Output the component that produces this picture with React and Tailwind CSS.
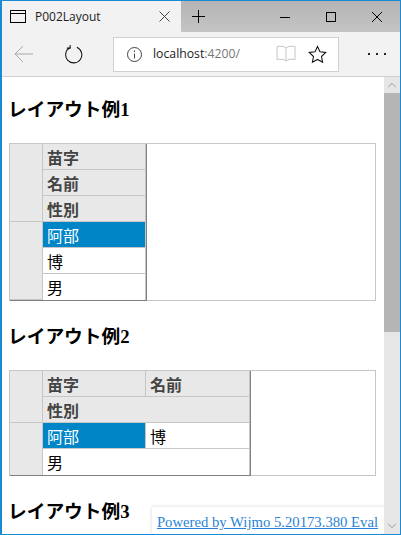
import { ChevronUp, ChevronDown } from "lucide-react";

const cellBase = "flex items-center pl-[4px] h-[26px] border-b border-r border-[#c6c6c6] text-[16px] leading-none font-['Noto_Sans_CJK_JP',sans-serif]";
const head = `${cellBase} bg-[#e8e8e8] font-bold text-[#444444]`;
const data = `${cellBase} bg-white text-black`;
const selected = `${cellBase} bg-[#0085c7] text-white`;
const side = "bg-[#e8e8e8] border-r border-b border-[#c6c6c6] row-span-3";

function Heading({ n, className = "" }) {
  return (
    <h2 className={`text-[18.72px] leading-[24px] font-bold text-black font-['Liberation_Serif','Noto_Sans_CJK_JP',serif] ${className}`}>
      レイアウト例{n}
    </h2>
  );
}

function TitleBar() {
  return (
    <div className="flex h-[31px] bg-gradient-to-b from-[#b4b4b4] to-[#c4c4c4]">
      <div className="flex items-center w-[179px] bg-[#f2f2f2] pl-[8px] pr-[5px]">
        <svg width="18" height="14" viewBox="0 0 18 14" fill="none" stroke="#000" strokeWidth="1">
          <rect x="0.5" y="0.5" width="15" height="12" />
          <path d="M0.5 3.5h15" />
        </svg>
        <span className="ml-[7px] text-[12px] text-[#222] font-['Open_Sans',sans-serif]">P002Layout</span>
        <svg className="ml-auto mr-[6px]" width="11" height="11" viewBox="0 0 11 11" stroke="#444" strokeWidth="1"><path d="M0.5 0.5l10 10M10.5 0.5l-10 10" /></svg>
      </div>
      <div className="flex items-center justify-center w-[34px]">
        <svg width="13" height="13" viewBox="0 0 13 13" stroke="#000" strokeWidth="1"><path d="M6.5 0v13M0 6.5h13" /></svg>
      </div>
      <div className="flex items-center ml-auto">
        <div className="flex items-center justify-center w-[46px]">
          <svg width="10" height="10" viewBox="0 0 10 10" stroke="#000" strokeWidth="1"><path d="M0 5.5h10" /></svg>
        </div>
        <div className="flex items-center justify-center w-[46px]">
          <svg width="10" height="10" viewBox="0 0 10 10" fill="none" stroke="#000" strokeWidth="1"><rect x="0.5" y="0.5" width="9" height="9" /></svg>
        </div>
        <div className="flex items-center justify-center w-[46px]">
          <svg width="10" height="10" viewBox="0 0 10 10" stroke="#000" strokeWidth="1"><path d="M0 0l10 10M10 0L0 10" /></svg>
        </div>
      </div>
    </div>
  );
}

function Toolbar() {
  return (
    <div className="flex items-center h-[45px] bg-[#f2f2f2] border-b border-[#d0d0d0]">
      <svg className="ml-[12px]" width="19" height="18" viewBox="0 0 19 18" fill="none" stroke="#a8a8a8" strokeWidth="1"><path d="M19 9H1M9 1L1 9l8 8" /></svg>
      <svg className="ml-[31px]" width="19" height="20" viewBox="0 0 20 20" fill="none" stroke="#111" strokeWidth="1.1"><path d="M6 3.5A8.5 8.5 0 1 0 13.5 3" /><path d="M6.5 0.5v3.3H3" /></svg>
      <div className="flex items-center ml-[30px] w-[226px] h-[35px] bg-white border border-[#d0d0d0]">
        <svg className="ml-[13px]" width="15" height="15" viewBox="0 0 15 15" fill="none" stroke="#444" strokeWidth="1"><circle cx="7.5" cy="7.5" r="7" /><path d="M7.5 6.5v5M7.5 3.5v1.5" /></svg>
        <span className="ml-[11px] text-[12.25px] text-[#222] font-['Open_Sans',sans-serif]">localhost<span className="text-[#777]">:4200/</span></span>
        <svg className="ml-auto" width="20" height="18" viewBox="0 0 20 18" fill="none" stroke="#c4c4c4" strokeWidth="1"><path d="M10 3C8 1 4 1 1 1.5v13c3-.5 7-.5 9 1.5 2-2 6-2 9-1.5v-13C16 1 12 1 10 3zM10 3v13" /></svg>
        <svg className="ml-[12px] mr-[11px]" width="19" height="19" viewBox="0 0 20 20" fill="none" stroke="#111" strokeWidth="1.1"><path d="M10 1.5l2.600 5.700 6.100.7-4.500 4.200 1.200 6.100L10 15.200l-5.400 3 1.200-6.100L1.300 7.900l6.100-.7z" /></svg>
      </div>
      <div className="flex items-center gap-[6px] ml-[29px]">
        <span className="w-[2px] h-[2px] bg-[#222]" />
        <span className="w-[2px] h-[2px] bg-[#222]" />
        <span className="w-[2px] h-[2px] bg-[#222]" />
      </div>
    </div>
  );
}

function LayoutOne() {
  return (
    <div className="mt-[21px] ml-[7px] w-[367px] h-[158px] border border-[#c6c6c6]">
      <div className="grid grid-cols-[33px_103px] w-[136px] border-b border-[#808080] shadow-[1px_0_0_#808080] bg-white">
        <div className={side} />
        <div className={head}>苗字</div>
        <div className={head}>名前</div>
        <div className={head}>性別</div>
        <div className={side} />
        <div className={selected}>阿部</div>
        <div className={data}>博</div>
        <div className={`${data} border-b-0 h-[25px]`}>男</div>
      </div>
    </div>
  );
}

function LayoutTwo() {
  return (
    <div className="mt-[21px] ml-[7px] w-[367px] h-[106px] border border-[#c6c6c6]">
      <div className="grid grid-cols-[33px_103px_104px] w-[240px] border-b border-[#808080] shadow-[1px_0_0_#808080] bg-white">
        <div className="bg-[#e8e8e8] border-r border-b border-[#c6c6c6] row-span-2" />
        <div className={head}>苗字</div>
        <div className={head}>名前</div>
        <div className={`${head} col-span-2`}>性別</div>
        <div className="bg-[#e8e8e8] border-r border-[#c6c6c6] row-span-2" />
        <div className={selected}>阿部</div>
        <div className={data}>博</div>
        <div className={`${data} col-span-2 border-b-0 h-[25px]`}>男</div>
      </div>
    </div>
  );
}

function Scrollbar() {
  return (
    <div className="flex flex-col w-[16px] bg-[#e6e6e6] shrink-0">
      <div className="flex items-center justify-center h-[16px]">
        <ChevronUp size={14} strokeWidth={1} color="#666" />
      </div>
      <div className="h-[239px] bg-[#b5b5b5]" />
      <div className="flex items-center justify-center h-[16px] mt-auto">
        <ChevronDown size={14} strokeWidth={1} color="#666" />
      </div>
    </div>
  );
}

export default function App() {
  return (
    <div className="flex flex-col w-[401px] h-[535px] overflow-hidden bg-white border-t border-b border-l-2 border-r border-[#1a8ad4]">
      <TitleBar />
      <Toolbar />
      <div className="flex flex-1 min-h-0">
        <div className="relative flex-1 overflow-hidden">
          <Heading n="1" className="mt-[21px] ml-[6px]" />
          <LayoutOne />
          <Heading n="2" className="mt-[24px] ml-[6px]" />
          <LayoutTwo />
          <Heading n="3" className="mt-[24px] ml-[6px]" />
          <div className="absolute right-0 bottom-0 h-[27px] pl-[5px] pr-[6px] pt-[5px] bg-white shadow-[0_0_4px_rgba(0,0,0,0.15)] text-[14.7px] leading-[20px] font-['Liberation_Serif',serif]">
            <a href="#" className="text-[#2a82d6] underline">Powered by Wijmo 5.20173.380 Eval</a>
          </div>
        </div>
        <Scrollbar />
      </div>
    </div>
  );
}
